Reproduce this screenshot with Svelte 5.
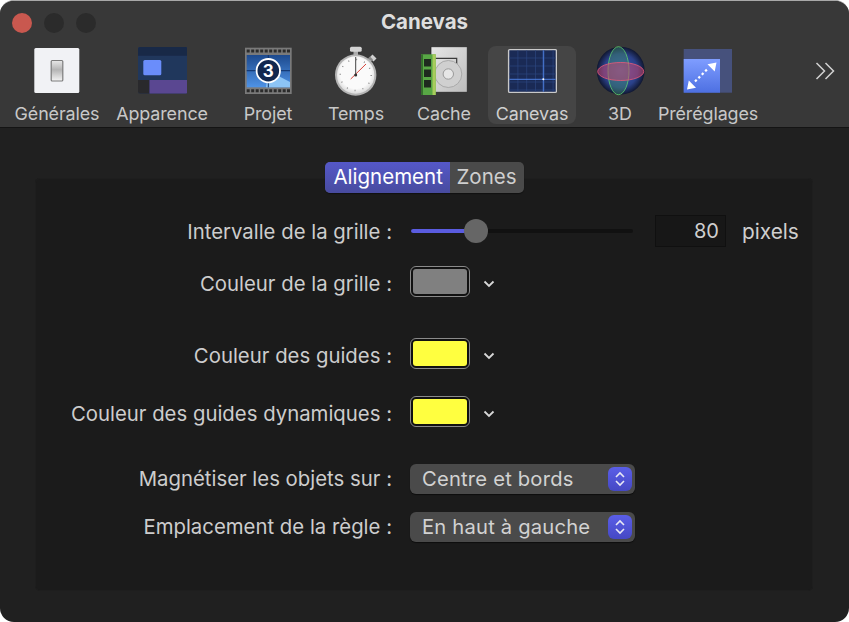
<script>
  const grid = [9, 17, 25, 33, 41];
</script>

<div class="win">
  <header class="top">
    <div class="bar">
      <div class="lights"><i class="red"></i><i></i><i></i></div>
      <div class="title">Canevas</div>
    </div>
    <nav class="tools">
      <div class="tool">
        <svg viewBox="0 0 50 50" width="50" height="50">
          <defs>
            <linearGradient id="sw" x1="0" y1="0" x2="0" y2="1"><stop offset="0" stop-color="#e8e8e8"/><stop offset=".45" stop-color="#b4b4b4"/><stop offset="1" stop-color="#f4f4f4"/></linearGradient>
          </defs>
          <rect x="2.3" y="2" width="45" height="45" rx="1.5" fill="#f1f2f5"/>
          <rect x="19.2" y="14.5" width="11.6" height="20.5" rx="1" fill="url(#sw)" stroke="#7c7c7c" stroke-width="1.2"/>
        </svg>
        <span>Générales</span>
      </div>
      <div class="tool wide">
        <svg viewBox="0 0 50 50" width="50" height="50">
          <rect x="1" y="1" width="49.5" height="46.4" rx="2" fill="#20375c"/>
          <path d="M1 9.7V3a2 2 0 0 1 2-2h45.5a2 2 0 0 1 2 2v6.7z" fill="#182947"/>
          <path d="M1 34h11.5v13.4H3a2 2 0 0 1-2-2z" fill="#29292c"/>
          <path d="M12.5 34h38v11.4a2 2 0 0 1-2 2h-36z" fill="#5a4791"/>
          <rect x="6.3" y="14" width="18" height="15.3" rx="1.5" fill="#6a8dfb"/>
        </svg>
        <span>Apparence</span>
      </div>
      <div class="tool wide2">
        <svg viewBox="0 0 50 50" width="50" height="50">
          <defs>
            <linearGradient id="fb" x1="0" y1="0" x2="0" y2="1"><stop offset="0" stop-color="#1d4a8e"/><stop offset="1" stop-color="#4f93e6"/></linearGradient>
          </defs>
          <rect x="2" y="1.7" width="46.7" height="46.3" fill="#7a7a7a"/>
          <path d="M3.7 3.5h3v3h-3zM8.2 3.5h3v3h-3zM12.7 3.5h3v3h-3zM17.2 3.5h3v3h-3zM21.7 3.5h3v3h-3zM26.2 3.5h3v3h-3zM30.7 3.5h3v3h-3zM35.2 3.5h3v3h-3zM39.7 3.5h3v3h-3zM44 3.5h3v3h-3zM3.7 43.3h3v3h-3zM8.2 43.3h3v3h-3zM12.7 43.3h3v3h-3zM17.2 43.3h3v3h-3zM21.7 43.3h3v3h-3zM26.2 43.3h3v3h-3zM30.7 43.3h3v3h-3zM35.2 43.3h3v3h-3zM39.7 43.3h3v3h-3zM44 43.3h3v3h-3z" fill="#2b2b2b"/>
          <rect x="3.7" y="9" width="43.3" height="32.3" fill="url(#fb)"/>
          <path d="M25.3 24.7 47 36v5.3H23z" fill="#8cc4f5"/>
          <path d="M25.3 9v32.3M3.7 24.7H47" stroke="#0e2f66" stroke-width="1"/>
          <circle cx="25.3" cy="24.7" r="11.7" fill="#12284f" stroke="#fff" stroke-width="1.8"/>
          <text x="25.3" y="30.6" text-anchor="middle" class="num">3</text>
        </svg>
        <span>Projet</span>
      </div>
      <div class="tool">
        <svg viewBox="0 0 50 50" width="50" height="50">
          <defs>
            <radialGradient id="wt" cx=".5" cy=".45" r=".55"><stop offset=".75" stop-color="#fafafa"/><stop offset="1" stop-color="#dcdcdc"/></radialGradient>
          </defs>
          <rect x="22.5" y="4" width="4.5" height="6" fill="#aaa"/>
          <rect x="19" y=".7" width="11.7" height="5" rx="1.5" fill="#d4d4d4"/>
          <path d="m38.5 11.5 3-3 4 4-3 3z" fill="#d0d0d0"/>
          <path d="m36 13.5 3-3 3 3-3 3z" fill="#8a8a8a"/>
          <circle cx="24.7" cy="29" r="20.7" fill="#b5b5b5"/>
          <circle cx="24.7" cy="29" r="18.7" fill="url(#wt)"/>
          <circle cx="24.7" cy="29" r="15.5" fill="none" stroke="#8a8a8a" stroke-width="1.4" stroke-dasharray="1 7.12"/>
          <path d="M19.7 33 35 18" stroke="#d8433a" stroke-width="1"/>
          <path d="M24.7 29V11" stroke="#444" stroke-width="1"/>
          <circle cx="24.7" cy="29" r="1.5" fill="#333"/>
        </svg>
        <span>Temps</span>
      </div>
      <div class="tool">
        <svg viewBox="0 0 50 50" width="50" height="50">
          <defs>
            <linearGradient id="dk" x1="0" y1="0" x2="1" y2="1"><stop offset="0" stop-color="#e6e6e6"/><stop offset="1" stop-color="#bdbdbd"/></linearGradient>
          </defs>
          <path d="M12 .7h36.3v45.6H12z" fill="url(#dk)" stroke="#1d1d1d" stroke-width=".7"/>
          <path d="M16 12.3h21.7v9" fill="none" stroke="#3a3a3a" stroke-width="1.2"/>
          <circle cx="29.3" cy="28" r="13.5" fill="#d0d0d0" stroke="#a9a9a9"/>
          <circle cx="29.3" cy="28" r="5.2" fill="#e6e6e6" stroke="#9a9a9a"/>
          <rect x="2" y="8.3" width="14.7" height="40.7" fill="#58a745"/>
          <rect x="2" y="8.3" width="2" height="40.7" fill="#356f2c"/>
          <rect x="13.5" y="8.3" width="3.2" height="40.7" fill="#a8cc5c"/>
          <path d="M5 13h7v7.5H5zM5 23.5h7V31H5zM5 34h7v7.5H5z" fill="#1f2a1f"/>
        </svg>
        <span>Cache</span>
      </div>
      <div class="tool on">
        <svg viewBox="0 0 50 50" width="50" height="50">
          <rect x="1.6" y="3.6" width="47.8" height="42.8" rx="1" fill="#1a2a55" stroke="#c9c9c9" stroke-width="1.4"/>
          {#each grid as g}
            <path d="M{g * 1.1 + 1} 4.3V45.7" stroke="#2c467f" stroke-width=".7"/>
            <path d="M2.3 {g + 3} H48.7" stroke="#2c467f" stroke-width=".7"/>
          {/each}
          <path d="M36.3 4.3V45.7M2.3 33.3H48.7" stroke="#4d7fe0" stroke-width="1"/>
          <circle cx="36.3" cy="33.3" r="1" fill="#fff"/>
        </svg>
        <span>Canevas</span>
      </div>
      <div class="tool">
        <svg viewBox="0 0 50 50" width="50" height="50">
          <defs>
            <radialGradient id="sp" cx=".5" cy=".5" r=".5"><stop offset="0" stop-color="#3f62c0"/><stop offset=".7" stop-color="#2a4088"/><stop offset="1" stop-color="#101730"/></radialGradient>
          </defs>
          <circle cx="25.7" cy="24.7" r="24" fill="url(#sp)"/>
          <ellipse cx="23.5" cy="24.7" rx="10.5" ry="24" fill="#3f8a6b" fill-opacity=".45" stroke="#5fcf6f" stroke-width=".8"/>
          <ellipse cx="25.7" cy="25.5" rx="23" ry="9" fill="#c2456f" fill-opacity=".55" stroke="#ea5a78" stroke-width=".8"/>
        </svg>
        <span>3D</span>
      </div>
      <div class="tool">
        <svg viewBox="0 0 50 50" width="50" height="50">
          <defs>
            <linearGradient id="pr" x1="0" y1="0" x2="0" y2="1"><stop offset="0" stop-color="#7f9dff"/><stop offset="1" stop-color="#4d70e2"/></linearGradient>
          </defs>
          <rect x=".7" y="3" width="48.3" height="43.7" fill="#46517c"/>
          <rect x=".7" y="13" width="36.3" height="33.7" fill="url(#pr)"/>
          <path d="m33.5 16.5-9 1.8 7.2 7.2zM4 43.5l9-1.8-7.2-7.2z" fill="#fff"/>
          <path d="M12 35.5 25 22.5" stroke="#fff" stroke-width="2.2" stroke-dasharray="2.4 2.4"/>
        </svg>
        <span>Préréglages</span>
      </div>
      <svg class="more" viewBox="0 0 20 18" width="20" height="18">
        <path d="M1.5 1 9.5 9l-8 8M10.500 1l8 8-8 8" fill="none" stroke="#d2d2d2" stroke-width="1.5"/>
      </svg>
    </nav>
  </header>

  <main class="content">
    <section class="panel">
      <div class="seg"><span class="sel">Alignement</span><span>Zones</span></div>

      <div class="row r1">
        <label class="first">Intervalle de la grille :</label>
        <div class="slider"><div class="fill"></div><div class="thumb"></div></div>
        <div class="field">80</div>
        <span class="unit">pixels</span>
      </div>
      <div class="row r2">
        <label>Couleur de la grille :</label>
        <div class="well"><div class="swatch gray"></div></div>
        <svg class="chev" viewBox="0 0 12 8" width="12" height="8"><path d="M1.5 1.5 6 6l4.500-4.500" fill="none" stroke="#d8d8d8" stroke-width="1.8"/></svg>
      </div>
      <div class="row r3">
        <label>Couleur des guides :</label>
        <div class="well"><div class="swatch yel"></div></div>
        <svg class="chev" viewBox="0 0 12 8" width="12" height="8"><path d="M1.5 1.5 6 6l4.500-4.500" fill="none" stroke="#d8d8d8" stroke-width="1.8"/></svg>
      </div>
      <div class="row r4">
        <label>Couleur des guides dynamiques :</label>
        <div class="well"><div class="swatch yel"></div></div>
        <svg class="chev" viewBox="0 0 12 8" width="12" height="8"><path d="M1.5 1.5 6 6l4.500-4.500" fill="none" stroke="#d8d8d8" stroke-width="1.8"/></svg>
      </div>
      <div class="row r5">
        <label>Magnétiser les objets sur :</label>
        <div class="select"><span>Centre et bords</span>
          <div class="step"><svg viewBox="0 0 14 18" width="14" height="18"><path d="M3 7l4-4 4 4M3 11l4 4 4-4" fill="none" stroke="#e8e8f4" stroke-width="1.6"/></svg></div>
        </div>
      </div>
      <div class="row r6">
        <label>Emplacement de la règle :</label>
        <div class="select"><span>En haut à gauche</span>
          <div class="step"><svg viewBox="0 0 14 18" width="14" height="18"><path d="M3 7l4-4 4 4M3 11l4 4 4-4" fill="none" stroke="#e8e8f4" stroke-width="1.6"/></svg></div>
        </div>
      </div>
    </section>
  </main>
</div>

<style>
  :global(body) { margin: 0; background: #fff; }
  .win {
    width: 849px; height: 622px; box-sizing: border-box;
    border-radius: 14px; overflow: hidden;
    background: #202020; border-top: 1px solid #a8a8a8;
    font-family: Inter, "Liberation Sans", sans-serif;
    font-size: 18px; color: #cfcfcf;
    display: flex; flex-direction: column;
  }
  .top { height: 127px; background: #383838; box-sizing: border-box; border-bottom: 1px solid #141414; }
  .bar { height: 43px; display: grid; grid-template-columns: 1fr auto 1fr; align-items: center; padding: 0 12px; }
  .lights { display: flex; gap: 12px; }
  .lights i { width: 20px; height: 20px; border-radius: 50%; background: #2b2b2b; }
  .lights i.red { background: #c9584f; }
  .title { font-weight: 700; font-size: 20.5px; color: #dedede; grid-column: 2; margin-bottom: 2px; }
  .tools { display: flex; padding-left: 13px; margin-top: 2px; align-items: flex-start; }
  .tool {
    width: 88px; height: 78px; box-sizing: border-box; border-radius: 8px;
    display: flex; flex-direction: column; align-items: center; flex: none;
    color: #c8c8c8; font-size: 17.9px; white-space: nowrap; letter-spacing: -.1px;
  }
  .tool svg { display: block; height: 50px; margin-bottom: 7px; }
  .tool.wide { margin-left: 17px; }
  .tool.wide2 { margin-left: 18px; }
  .tool.on { background: #454545; color: #d0d0d0; }
  .num { font: 700 17px Inter, "Liberation Sans", sans-serif; fill: #fff; }
  .more { margin-left: 63px; margin-top: 16px; flex: none; }

  .content { flex: 1; padding: 50px 36px 31px 35px; display: flex; }
  .panel {
    flex: 1; border-radius: 5px; background: #1b1b1b;
    box-shadow: inset 0 0 0 1px #1e1e1e;
    display: flex; flex-direction: column;
  }
  .seg {
    align-self: center; display: flex; height: 31px; margin-top: -16px; margin-left: 1px;
    border-radius: 5px; overflow: hidden; background: #4a4a4a; color: #cfcfcf;
    line-height: 30px; font-size: 20.5px; box-shadow: 0 1px 1px #0006;
  }
  .seg span { padding: 0 7px 0 6px; }
  .seg .sel { width: 125px; box-sizing: border-box; padding: 0 0 0 8px; color: #fff; background: linear-gradient(#5558c8, #484b9f); }

  .row { display: flex; align-items: center; height: 32px; }
  .r1 { margin-top: 22px; }
  .r2 { margin-top: 21px; }
  .r3 { margin-top: 40px; }
  .r4 { margin-top: 26px; }
  .r5 { margin-top: 33px; }
  .r6 { margin-top: 16px; }
  label { width: 357px; margin-right: 18px; margin-bottom: 2px; text-align: right; color: #cdcdcd; font-size: 20.35px; white-space: nowrap; flex: none; }
  label.first { margin-bottom: 0; }

  .slider { position: relative; width: 222px; height: 4px; margin: -1px 0 0 1px; background: #111; border-radius: 2px; flex: none; }
  .fill { width: 55px; height: 4px; border-radius: 2px; background: #5a5ce0; }
  .thumb { position: absolute; left: 53px; top: -10px; width: 24px; height: 24px; border-radius: 50%; background: #666; }
  .field {
    width: 71px; height: 32px; box-sizing: border-box; margin-left: 22px; padding-right: 6px;
    text-align: right; line-height: 30px; background: #171717; border: 1px solid #101010; font-size: 20px; color: #cfcfcf;
  }
  .unit { margin-left: 16px; font-size: 20.8px; }

  .well {
    width: 60px; height: 31px; box-sizing: border-box; padding: 2px; margin-bottom: 5px;
    border: 1px solid #8a8a8a; border-radius: 6px; background: #111; flex: none;
  }
  .swatch { width: 100%; height: 100%; border-radius: 3px; }
  .gray { background: #808080; }
  .yel { background: #ffff40; }
  .chev { margin-left: 13px; flex: none; }

  .select {
    width: 225px; height: 30px; box-sizing: border-box; padding: 0 3px 0 12px;
    display: flex; align-items: center; justify-content: space-between;
    border-radius: 6px; background: #4a4a4a; box-shadow: 0 1px 1px #0008;
    font-size: 20.2px; color: #d2d2d2; flex: none; letter-spacing: .2px;
  }
  .select span { margin-bottom: 2px; }
  .step {
    width: 24px; height: 24px; border-radius: 6px; background: linear-gradient(#5a5ee8, #4548c4);
    display: flex; align-items: center; justify-content: center;
  }
  .step svg { display: block; }
</style>
